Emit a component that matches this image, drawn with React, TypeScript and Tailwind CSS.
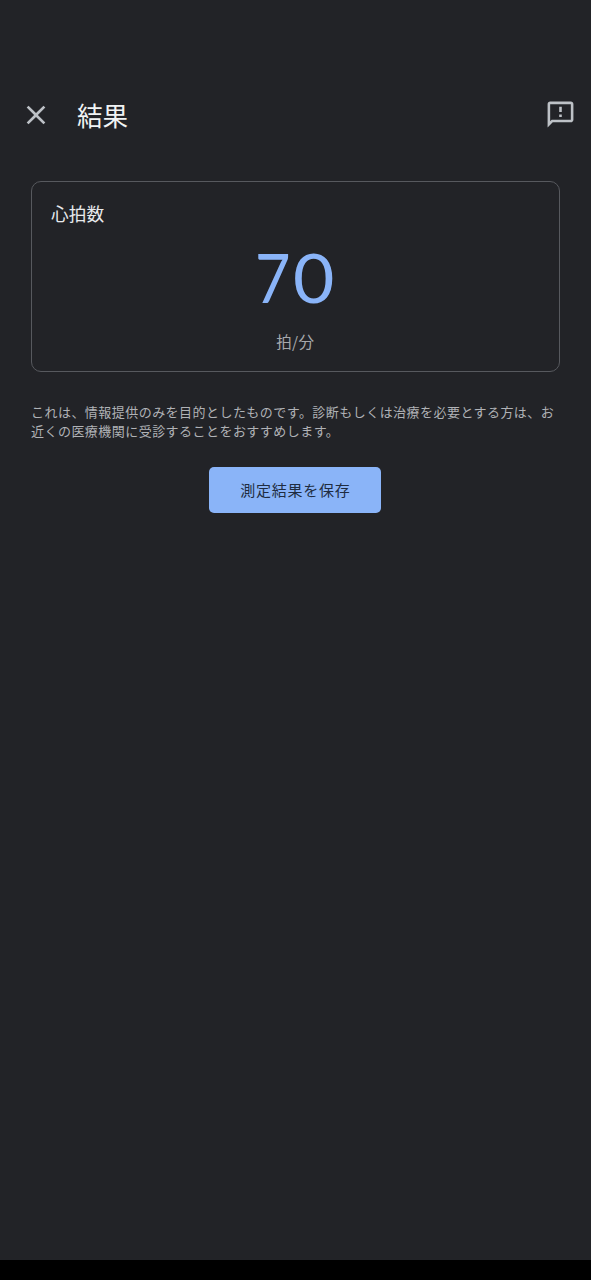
import { MdClose, MdOutlineFeedback } from "react-icons/md";

type ResultCardProps = {
	label: string;
	value: number;
	unit: string;
};

const ResultCard = ({ label, value, unit }: ResultCardProps) => {
	const [first, ...rest] = String(value);

	return (
		<section className="mr-[31px] ml-[30.5px] mt-[39px] h-[191px] rounded-[10px] border border-[#57595e] px-[19.5px] pt-[18px]">
			<h2 className="text-[17.7px] leading-[26px] text-[#e8eaed]">{label}</h2>
			<div className="mt-4 flex h-[70px] items-center justify-center pr-[2px] font-['Lato'] text-[68px] leading-[70px] text-[#8ab4f8]">
				<span className="mr-[2px] -ml-[2px] inline-block scale-x-[0.9]">{first}</span>
				<span className="inline-block scale-x-[1.05]">{rest.join("")}</span>
			</div>
			<p className="mt-[17px] text-center text-[15.5px] leading-6 tracking-[0.3px] text-[#a6a8ac]">{unit}</p>
		</section>
	);
};

export default function App() {
	return (
		<div className="flex h-[1280px] w-[591px] flex-col bg-[#222327] font-['Noto_Sans_CJK_JP',sans-serif]">
			<header className="mt-[87px] flex h-[55px] items-center pr-[15px] pl-[20px]">
				<button type="button" aria-label="閉じる">
					<MdClose className="size-[32px] text-[#bdc1c6]" />
				</button>
				<h1 className="ml-[25px] flex-1 text-[25.6px] leading-[38px] text-[#f1f3f4]">結果</h1>
				<button type="button" aria-label="フィードバック">
					<MdOutlineFeedback className="size-[31px] text-[#bdc1c6]" />
				</button>
			</header>

			<main className="flex flex-1 flex-col">
				<ResultCard label="心拍数" value={70} unit="拍/分" />

				<p className="mt-[30px] ml-[31px] text-[13px] leading-[19px] tracking-[0.46px] text-[#b0b2b6]">
					これは、情報提供のみを目的としたものです。診断もしくは治療を必要とする方は、お
					<br />
					近くの医療機関に受診することをおすすめします。
				</p>

				<button
					type="button"
					className="mt-[27px] mr-px h-[46px] w-[172px] self-center rounded-[5px] bg-[#8ab4f8] pl-px text-[15px] tracking-[0.75px] text-[#202c40]"
				>
					測定結果を保存
				</button>
			</main>

			{/* Barra de navegación del sistema */}
			<footer className="h-[20px] bg-black" />
		</div>
	);
}
